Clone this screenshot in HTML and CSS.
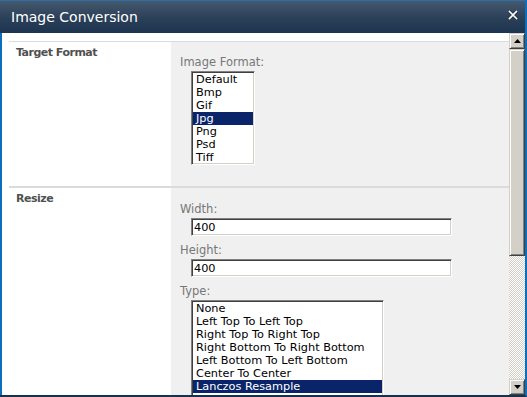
FILE: index.html
```html
<!DOCTYPE html>
<html lang="en">
<head>
  <meta charset="UTF-8">
  <title>Image Conversion</title>
  <link rel="stylesheet" href="styles.css">
</head>
<body>
  <div class="dialog">
    <div class="titlebar">
      <span class="title">Image Conversion</span>
      <span class="close">
        <svg width="10" height="10" viewBox="0 0 10 10">
          <path d="M1.5 1.5 L8.5 8.5 M8.5 1.5 L1.5 8.5" stroke="#2a3a4c" stroke-width="3.6" stroke-linecap="square"/>
          <path d="M1.5 1.5 L8.5 8.5 M8.5 1.5 L1.5 8.5" stroke="#ffffff" stroke-width="1.6" stroke-linecap="square"/>
        </svg>
      </span>
    </div>

    <div class="frame">
      <div class="content">
        <!-- format -->
        <div class="section">
          <div class="section-title">Target Format</div>
          <div class="section-fields">
            <div class="label">Image Format:</div>
            <div class="listbox format-list">
              <div class="option">Default</div>
              <div class="option">Bmp</div>
              <div class="option">Gif</div>
              <div class="option selected">Jpg</div>
              <div class="option">Png</div>
              <div class="option">Psd</div>
              <div class="option">Tiff</div>
            </div>
          </div>
        </div>

        <!-- resize -->
        <div class="section section-resize">
          <div class="section-title">Resize</div>
          <div class="section-fields">
            <div class="label">Width:</div>
            <input class="textbox" type="text" value="400">
            <div class="label">Height:</div>
            <input class="textbox" type="text" value="400">
            <div class="label">Type:</div>
            <div class="listbox type-list">
              <div class="option">None</div>
              <div class="option">Left Top To Left Top</div>
              <div class="option">Right Top To Right Top</div>
              <div class="option">Right Bottom To Right Bottom</div>
              <div class="option">Left Bottom To Left Bottom</div>
              <div class="option">Center To Center</div>
              <div class="option selected">Lanczos Resample</div>
            </div>
          </div>
        </div>
      </div>

      <div class="scrollbar">
        <div class="sb-button">
          <svg width="7" height="4" viewBox="0 0 7 4"><polygon points="3.5,0 7,4 0,4" fill="#000"/></svg>
        </div>
        <div class="sb-track">
          <div class="sb-thumb"></div>
        </div>
        <div class="sb-button">
          <svg width="7" height="4" viewBox="0 0 7 4"><polygon points="0,0 7,0 3.5,4" fill="#000"/></svg>
        </div>
      </div>
    </div>
  </div>
</body>
</html>
```

FILE: styles.css
```css
body {
  margin: 0;
  font-family: "DejaVu Sans", Verdana, sans-serif;
  font-size: 11px;
  background: #ffffff;
}
.dialog {
  width: 527px;
  height: 397px;
  box-sizing: border-box;
  border-right: 2px solid #0b6fc0;
  border-bottom: 2px solid #17324f;
  display: flex;
  flex-direction: column;
  overflow: hidden;
}

/* 标题栏 */
.titlebar {
  box-sizing: border-box;
  height: 33px;
  border-top: 1px solid #2f6fa8;
  background: linear-gradient(#45596e, #2a4058 55%, #1d3450);
  display: flex;
  align-items: flex-start;
  justify-content: space-between;
  padding: 8px 7px 0 11px;
}
.title {
  color: #ffffff;
  font-size: 14px;
  line-height: 17px;
}
.close {
  display: flex;
  margin-top: 1px;
}

.frame {
  flex: 1;
  display: flex;
  border-left: 2px solid #0b6fc0;
  min-height: 0;
}
.content {
  flex: 1;
  padding: 8px 0 0 7px;
  overflow: hidden;
  background: #ffffff;
}

/* 表单分区 */
.section {
  display: flex;
  border-top: 1px solid #dbdbdb;
}
.section-resize {
  border-top-width: 2px;
}
.section-title {
  width: 155px;
  padding: 4px 0 0 7px;
  font-weight: bold;
  color: #505050;
  letter-spacing: -0.5px;
  line-height: 13px;
}
.section-fields {
  flex: 1;
  background: #f0f0f0;
  padding: 13px 0 21px 9px;
  display: flex;
  flex-direction: column;
  align-items: flex-start;
}
.section-resize .section-fields {
  padding-top: 14px;
}
.label {
  color: #777777;
  font-size: 11.5px;
  line-height: 14px;
}

/* 列表框和输入框 */
.listbox,
.textbox {
  box-sizing: border-box;
  margin-left: 11px;
  border: 1px solid;
  border-color: #808080 #ffffff #ffffff #808080;
  box-shadow: inset 1px 1px #404040, inset -1px -1px #d4d0c8;
  background: #ffffff;
}
.listbox {
  padding: 1px;
  overflow: hidden;
  margin-top: 2px;
  font-size: 11.3px;
}
.format-list {
  width: 64px;
  height: 94px;
}
.type-list {
  width: 193px;
  height: 110px;
}
.option {
  height: 13px;
  line-height: 13px;
  padding-left: 3px;
  color: #000000;
  white-space: nowrap;
}
.option.selected {
  background: #0a246a;
  color: #ffffff;
}
.textbox {
  width: 261px;
  height: 18px;
  margin-top: 2px;
  margin-bottom: 7px;
  padding: 0 0 0 2px;
  font-family: "DejaVu Sans", Verdana, sans-serif;
  font-size: 11.3px;
  color: #000000;
  outline: none;
}

/* 滚动条 */
.scrollbar {
  width: 16px;
  display: flex;
  flex-direction: column;
}
.sb-button,
.sb-thumb {
  box-sizing: border-box;
  background: #d4d0c8;
  border: 1px solid;
  border-color: #d4d0c8 #404040 #404040 #d4d0c8;
  box-shadow: inset 1px 1px #ffffff, inset -1px -1px #808080;
}
.sb-button {
  height: 16px;
  display: flex;
  align-items: center;
  justify-content: center;
}
.sb-track {
  flex: 1;
  background: repeating-conic-gradient(#d4d0c8 0 25%, #ffffff 0 50%) 0 0 / 2px 2px;
}
.sb-thumb {
  height: 207px;
}
```
